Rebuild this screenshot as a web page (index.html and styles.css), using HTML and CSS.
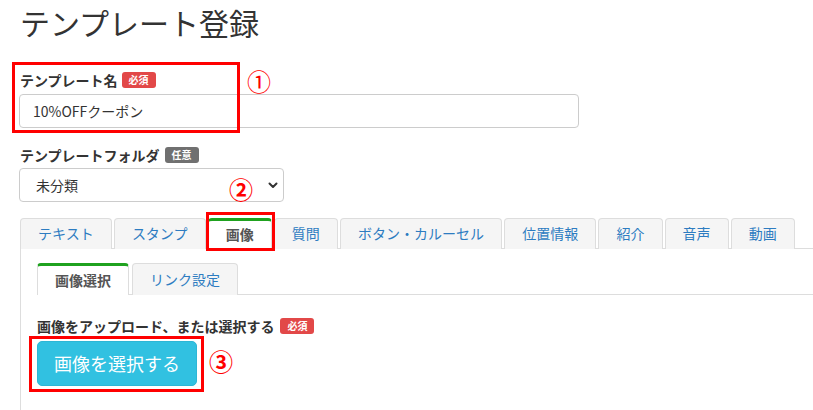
FILE: index.html
```html
<!DOCTYPE html>
<html lang="ja">
<head>
<meta charset="utf-8">
<title>テンプレート登録</title>
<link rel="stylesheet" href="styles.css">
</head>
<body>
<div class="page">
  <h1 class="title">テンプレート登録</h1>

  <div class="field field-name">
    <label class="label">テンプレート名<span class="badge badge-req">必須</span></label>
    <input class="input" type="text" value="10%OFFクーポン">
  </div>

  <div class="field field-folder">
    <label class="label">テンプレートフォルダ<span class="badge badge-opt">任意</span></label>
    <div class="select-wrap">
      <select class="select"><option>未分類</option></select>
      <svg class="chevron" width="10" height="7" viewBox="0 0 10 7"><polyline points="1.5,1.5 5,5 8.5,1.5" fill="none" stroke="#333" stroke-width="2" stroke-linecap="round" stroke-linejoin="round"/></svg>
    </div>
  </div>

  <div class="tabs">
    <ul class="tab-list">
      <li class="tab">テキスト</li>
      <li class="tab">スタンプ</li>
      <li class="tab tab-active">画像</li>
      <li class="tab">質問</li>
      <li class="tab">ボタン・カルーセル</li>
      <li class="tab">位置情報</li>
      <li class="tab">紹介</li>
      <li class="tab">音声</li>
      <li class="tab">動画</li>
    </ul>
    <div class="panel">
      <ul class="subtab-list">
        <li class="subtab subtab-active">画像選択</li>
        <li class="subtab">リンク設定</li>
      </ul>
      <div class="upload">
        <div class="label">画像をアップロード、または選択する<span class="badge badge-req badge-wide">必須</span></div>
        <button class="btn" type="button">画像を選択する</button>
      </div>
    </div>
  </div>

  <div class="mark mark-box mark-box-1"></div>
  <div class="mark mark-box mark-box-2"></div>
  <div class="mark mark-box mark-box-3"></div>
  <div class="mark mark-num mark-num-1">①</div>
  <div class="mark mark-num mark-num-2">②</div>
  <div class="mark mark-num mark-num-3">③</div>
</div>
</body>
</html>
```

FILE: styles.css
```css
* { box-sizing: border-box; }

html, body {
  margin: 0;
  padding: 0;
  background: #fff;
  overflow: hidden;
}

body {
  font-family: "Noto Sans CJK JP", "Noto Sans", sans-serif;
  color: #333;
  width: 813px;
  height: 410px;
}

.page {
  position: relative;
  padding: 0 0 0 20px;
  height: 410px;
  overflow: hidden;
}

.title {
  margin: 0;
  font-size: 30px;
  line-height: 44px;
  font-weight: 400;
  color: #333;
}

.field-name { margin-top: 26px; }
.field-folder { margin-top: 17px; }

.label {
  display: flex;
  align-items: center;
  font-size: 14px;
  font-weight: 700;
  line-height: 20px;
  color: #333;
}

.field-name .label { margin-bottom: 4px; }
.field-folder .label { margin-bottom: 3px; }

.badge {
  display: inline-block;
  margin-left: 4px;
  padding: 0 7px;
  font-size: 10px;
  line-height: 16px;
  font-weight: 700;
  color: #fff;
  border-radius: 3px;
}
.badge-req { background: #e24848; }
.badge-opt { background: #707070; margin-left: 5px; }
.badge-wide { margin-left: 6px; }

.input {
  display: block;
  margin-left: -1px;
  width: 560px;
  height: 34px;
  padding: 0 13px;
  font-family: inherit;
  font-size: 14px;
  color: #333;
  border: 1px solid #ccc;
  border-radius: 4px;
  outline: none;
}

.select-wrap {
  position: relative;
  margin-left: -1px;
  width: 265px;
}

.select {
  display: block;
  width: 100%;
  height: 34px;
  padding: 0 16px;
  font-family: inherit;
  font-size: 14px;
  color: #333;
  background: #fff;
  border: 1px solid #ccc;
  border-radius: 4px;
  -webkit-appearance: none;
  appearance: none;
  outline: none;
}

.chevron {
  position: absolute;
  right: 6px;
  top: 14px;
}

.tabs { margin-top: 16px; }

.tab-list {
  display: flex;
  gap: 2px;
  margin: 0;
  padding: 0;
  list-style: none;
  border-bottom: 1px solid #ddd;
}

.tab {
  padding: 0 17.1px;
  height: 31px;
  line-height: 29px;
  font-size: 14px;
  color: #2d7cc1;
  background: #f5f5f5;
  border: 1px solid #ddd;
  border-bottom: none;
  border-radius: 4px 4px 0 0;
  margin-bottom: -1px;
  white-space: nowrap;
}

.tab-active {
  background: #fff;
  color: #555;
  font-weight: 700;
  border-top: 3px solid #1fa21f;
  line-height: 27px;
}

.panel {
  border-left: 1px solid #ddd;
  padding: 14px 0 0 16px;
  height: 162px;
}

.subtab-list {
  display: flex;
  gap: 3px;
  margin: 0;
  padding: 0;
  list-style: none;
  border-bottom: 1px solid #ddd;
}

.subtab {
  padding: 0 17px;
  height: 32px;
  line-height: 30px;
  font-size: 14px;
  color: #2d7cc1;
  background: #f5f5f5;
  border: 1px solid #ddd;
  border-bottom: none;
  border-radius: 4px 4px 0 0;
  margin-bottom: -1px;
  white-space: nowrap;
}

.subtab-active {
  background: #fff;
  color: #555;
  font-weight: 700;
  border-top: 3px solid #1fa21f;
  line-height: 28px;
}

.upload { padding-top: 21px; }
.upload .label { margin-bottom: 5px; }

.btn {
  display: block;
  height: 45px;
  padding: 0 16px;
  font-family: inherit;
  font-size: 18px;
  line-height: 43px;
  color: #fff;
  background: #31c1e1;
  border: 1px solid #2db6d5;
  border-radius: 5px;
  cursor: pointer;
}

.mark { position: absolute; }

.mark-box { border: 3px solid #f00; }
.mark-box-1 { left: 12px; top: 62px; width: 228px; height: 71px; }
.mark-box-2 { left: 206px; top: 212px; width: 69px; height: 39px; }
.mark-box-3 { left: 29px; top: 336px; width: 175px; height: 56px; }

.mark-num {
  color: #f00;
  font-size: 24px;
  line-height: 24px;
}
.mark-num-1 { left: 247px; top: 69px; }
.mark-num-2 { left: 229px; top: 177px; font-weight: 700; }
.mark-num-3 { left: 209px; top: 349px; font-weight: 700; }
```
